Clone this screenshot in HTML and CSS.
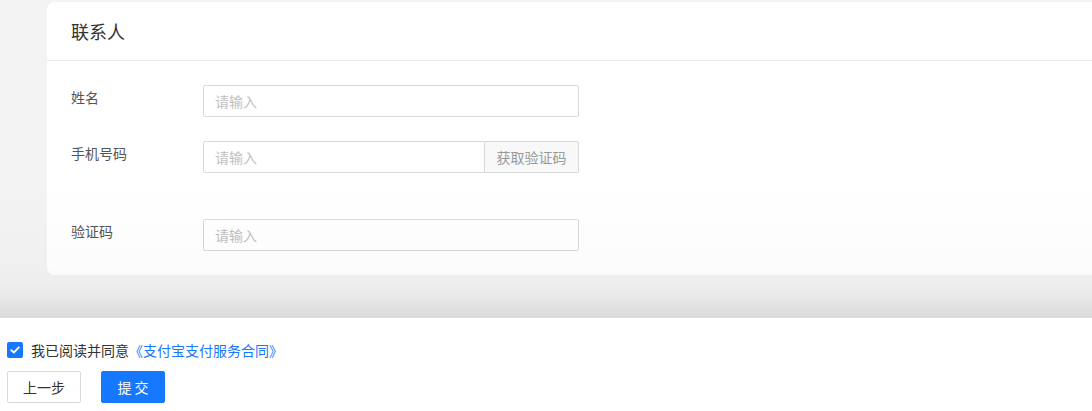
FILE: index.html
```html
<!DOCTYPE html>
<html lang="zh-CN">
<head>
<meta charset="utf-8">
<title>联系人</title>
<link rel="stylesheet" href="styles.css">
</head>
<body>
<main class="page">
  <section class="card">
    <header class="card-head">联系人</header>
    <div class="card-body">
      <div class="form-row">
        <label class="form-label">姓名</label>
        <div class="field"><input class="input" type="text" placeholder="请输入"></div>
      </div>
      <div class="form-row form-row--extra">
        <label class="form-label">手机号码</label>
        <div class="field field--group">
          <input class="input input--grouped" type="text" placeholder="请输入">
          <span class="addon">获取验证码</span>
        </div>
      </div>
      <div class="form-row">
        <label class="form-label">验证码</label>
        <div class="field"><input class="input" type="text" placeholder="请输入"></div>
      </div>
    </div>
  </section>
</main>
<footer class="footer">
  <div class="agree">
    <span class="checkbox">
      <svg width="10" height="8" viewBox="0 0 10 8"><path d="M1.2 4.1 L3.8 6.5 L8.8 1.4" fill="none" stroke="#fff" stroke-width="1.8" stroke-linecap="round" stroke-linejoin="round"/></svg>
    </span>
    <span class="agree-text">我已阅读并同意</span>
    <a class="agree-link">《支付宝支付服务合同》</a>
  </div>
  <div class="actions">
    <button class="btn">上一步</button>
    <button class="btn btn--primary">提 交</button>
  </div>
</footer>
</body>
</html>
```
FILE: styles.css
```css
* { box-sizing: border-box; }
html, body {
  margin: 0;
  padding: 0;
  height: 100%;
  overflow: hidden;
}
body {
  background: #f3f3f3;
  font-family: "Noto Sans CJK SC", "Noto Sans", "Liberation Sans", sans-serif;
  font-size: 14px;
  color: #333;
}
.page {
  padding: 2px 0 0 47px;
}
.card {
  background: #fff;
  border-radius: 8px 0 0 8px;
}
.card-head {
  height: 59px;
  padding: 0 24px;
  display: flex;
  align-items: center;
  font-size: 18px;
  color: #333;
  border-bottom: 1px solid #ebebeb;
}
.card-body {
  padding: 24px;
}
.form-row {
  display: flex;
  align-items: flex-start;
  margin-bottom: 24px;
}
.form-row:last-child { margin-bottom: 0; }
.form-row--extra { margin-bottom: 46px; }
.form-label {
  width: 132px;
  flex: none;
  line-height: 25px;
  color: #555;
  font-size: 14px;
}
.field {
  width: 376px;
  height: 32px;
  display: flex;
}
.input {
  flex: 1;
  min-width: 0;
  height: 32px;
  border: 1px solid #d9d9d9;
  border-radius: 2px;
  padding: 0 11px;
  font: inherit;
  font-size: 14px;
  color: #333;
  outline: none;
  background: #fff;
}
.input::placeholder { color: #bfbfbf; }
.input--grouped {
  border-radius: 2px 0 0 2px;
}
.addon {
  width: 94px;
  flex: none;
  height: 32px;
  border: 1px solid #d9d9d9;
  border-left: none;
  border-radius: 0 2px 2px 0;
  background: #f8f8f8;
  color: #999;
  display: flex;
  align-items: center;
  justify-content: center;
  font-size: 14px;
}
.footer {
  position: fixed;
  left: 0;
  right: 0;
  bottom: 0;
  height: 93px;
  background: #fff;
  padding: 21px 7px 0 7px;
}
.footer::before {
  content: "";
  position: absolute;
  left: 0;
  right: 0;
  bottom: 100%;
  height: 140px;
  pointer-events: none;
  background: linear-gradient(to bottom,
    rgba(0,0,0,0) 0%,
    rgba(0,0,0,0.008) 45%,
    rgba(0,0,0,0.015) 70%,
    rgba(0,0,0,0.04) 85%,
    rgba(0,0,0,0.1) 100%);
}
.agree {
  display: flex;
  align-items: center;
  height: 22px;
}
.checkbox {
  width: 16px;
  height: 16px;
  border-radius: 2px;
  background: #1677ff;
  display: flex;
  align-items: center;
  justify-content: center;
  margin-right: 8px;
}
.agree-text { color: #333; }
.agree-link { color: #1677ff; cursor: pointer; }
.actions {
  display: flex;
  gap: 20px;
  margin-top: 10px;
}
.btn {
  height: 32px;
  width: 74px;
  border: 1px solid #d9d9d9;
  border-radius: 2px;
  background: #fff;
  color: #333;
  font: inherit;
  font-size: 14px;
  padding: 0;
  cursor: pointer;
}
.btn--primary {
  width: 64px;
  background: #1677ff;
  border-color: #1677ff;
  color: #fff;
}
```
